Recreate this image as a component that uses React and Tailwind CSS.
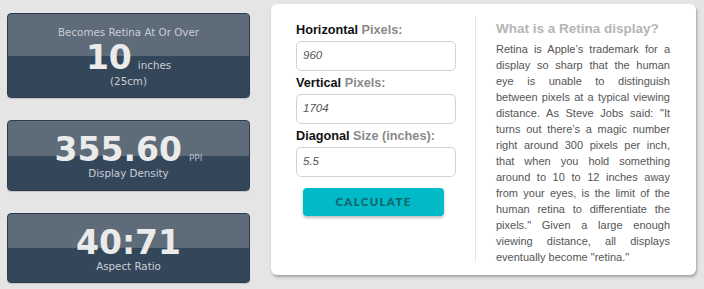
export default function App() {
  const card =
    "w-[243px] rounded-[4px] border border-[#2e3c4c] bg-[linear-gradient(to_bottom,#5e6b79_50%,#34465a_50%)] text-center [font-family:'DejaVu_Sans',Verdana,sans-serif] shadow-[0_1px_1px_rgba(0,0,0,0.15)]";
  const small = "text-[10.3px] leading-[12px] text-[#c9ced4]";
  const big = "text-[33px] leading-[33px] font-bold text-[#ebebeb]";
  return (
    <div className="w-[704px] h-[289px] bg-[#e4e5e4] flex items-start overflow-hidden">
      <div className="ml-[7px] mt-[13px] flex flex-col gap-[22px]">
        <div className={card + " h-[85px] pt-[12px]"}>
          <div className={small}>Becomes Retina At Or Over</div>
          <div className="mt-[3px] flex items-baseline justify-center">
            <span className={big}>10</span>
            <span className={small + " ml-[6px]"}>inches</span>
          </div>
          <div className={small + " mt-[1px]"}>(25cm)</div>
        </div>
        <div className={card + " h-[71px] pt-[12px]"}>
          <div className="flex items-baseline justify-center">
            <span className={big}>355.60</span>
            <span className="ml-[7px] text-[9px] leading-[10px] text-[#b9c0c8]">PPI</span>
          </div>
          <div className={small + " mt-[1px]"}>Display Density</div>
        </div>
        <div className={card + " h-[70px] pt-[12px]"}>
          <div className={big}>40:71</div>
          <div className={small + " mt-[1px]"}>Aspect Ratio</div>
        </div>
      </div>

      <div className="ml-[21px] mt-[4px] w-[425px] h-[271px] bg-white rounded-[6px] shadow-[1px_2px_3px_rgba(0,0,0,0.3)] flex items-start [font-family:'Liberation_Sans',Arial,sans-serif]">
        <div className="ml-[25px] w-[160px] pt-[18px] flex flex-col">
          <div className="text-[12.7px] leading-[16px] font-bold text-[#111]">
            Horizontal <span className="text-[#8a8a8a]">Pixels:</span>
          </div>
          <div className="mt-[3px] h-[30px] rounded-[5px] border border-[#d2d2d2] flex items-center pl-[6px] text-[11.5px] italic text-[#555]">
            960
          </div>
          <div className="mt-[4px] text-[12.7px] leading-[16px] font-bold text-[#111]">
            Vertical <span className="text-[#8a8a8a]">Pixels:</span>
          </div>
          <div className="mt-[3px] h-[30px] rounded-[5px] border border-[#d2d2d2] flex items-center pl-[6px] text-[11.5px] italic text-[#555]">
            1704
          </div>
          <div className="mt-[4px] text-[12.7px] leading-[16px] font-bold text-[#111]">
            Diagonal <span className="text-[#8a8a8a]">Size (inches):</span>
          </div>
          <div className="mt-[3px] h-[30px] rounded-[5px] border border-[#d2d2d2] flex items-center pl-[6px] text-[11.5px] italic text-[#555]">
            5.5
          </div>
          <div className="mt-[11px] ml-[7px] w-[141px] h-[28px] rounded-[4px] bg-[#00bac7] shadow-[0_2px_3px_rgba(0,0,0,0.25)] flex items-center justify-center [font-family:Lato,sans-serif] font-black text-[11.5px] tracking-[1.3px] text-[#15646b]">
            CALCULATE
          </div>
        </div>

        <div className="ml-[19px] mt-[12px] w-px h-[246px] bg-[#e6e6e6]" />

        <div className="ml-[20px] w-[174px] pt-[17px]">
          <div className="text-[13.5px] leading-[16px] font-bold text-[#b5b5b5]">
            What is a Retina display?
          </div>
          <p className="mt-[3.5px] text-[11px] leading-[16px] text-[#555] text-justify">
            Retina is Apple’s trademark for a display so sharp that the human eye is unable to distinguish between pixels at a typical viewing distance. As Steve Jobs said: "It turns out there’s a magic number right around 300 pixels per inch, that when you hold something around to 10 to 12 inches away from your eyes, is the limit of the human retina to differentiate the pixels." Given a large enough viewing distance, all displays eventually become "retina."
          </p>
        </div>
      </div>
    </div>
  );
}
